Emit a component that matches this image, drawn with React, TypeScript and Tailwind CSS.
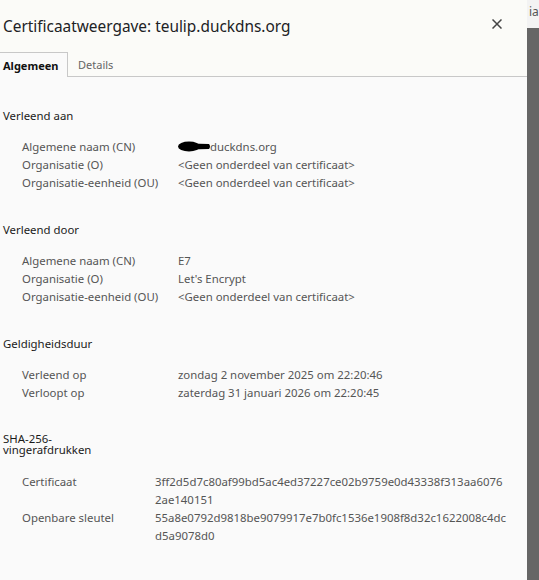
import React from "react";

const font = { fontFamily: '"Noto Sans", "Open Sans", Arial, sans-serif' };

function Row({ label, value, valueCol = "w-[178px]" }: { label: string; value: React.ReactNode; valueCol?: string }) {
  return (
    <div className="flex text-[11.4px] leading-[18px] text-[#555555]">
      <div className={`${valueCol} shrink-0 pl-[22px] whitespace-nowrap`}>{label}</div>
      <div className="flex-1 whitespace-nowrap">{value}</div>
    </div>
  );
}

function Section({
  title,
  children,
  first,
  titleClass = "leading-[13px]",
  bodyClass = "mt-[16px]",
}: {
  title: React.ReactNode;
  children: React.ReactNode;
  first?: boolean;
  titleClass?: string;
  bodyClass?: string;
}) {
  return (
    <div className={first ? "" : "mt-[31px]"}>
      <div className={`pl-[3px] text-[11.4px] text-[#1a1a1a] ${titleClass}`}>{title}</div>
      <div className={bodyClass}>{children}</div>
    </div>
  );
}

export default function App() {
  return (
    <div className="flex w-[539px] h-[580px] overflow-hidden bg-[#fafafa]" style={font}>
      <div className="w-[527px] shrink-0 bg-[#fafafa] flex flex-col">
        <div className="h-[52px] flex items-center justify-between pl-[3px] pr-[24px] bg-[#fbfbf8]">
          <div className="text-[15.4px] text-[#202124] mt-[1px]">Certificaatweergave: teulip.duckdns.org</div>
          <svg width="10" height="10" viewBox="0 0 10 10" className="mt-[-4px] mr-[1px]">
            <path d="M0.5 0.5 L9.5 9.5 M9.5 0.5 L0.5 9.5" stroke="#444" strokeWidth="1.5" />
          </svg>
        </div>
        <div className="flex h-[25px] bg-[#fbfbf8]">
          <div className="w-[68px] h-[25px] border-t border-r border-[#c8c8c8] bg-[#fafafa] flex items-center pl-[3px] pt-[2px] text-[11px] font-bold text-[#111]">
            Algemeen
          </div>
          <div className="flex-1 border-b border-[#c8c8c8] flex items-center pl-[10px] pt-[2px] text-[11px] text-[#666]">
            Details
          </div>
        </div>
        <div className="pt-[32px]">
          <Section title="Verleend aan" first>
            <Row
              label="Algemene naam (CN)"
              value={
                <div className="flex items-center h-[18px]">
                  <svg width="33" height="11" viewBox="0 0 33 11" className="shrink-0 mr-[-1px] mt-[-2px]">
                    <ellipse cx="11" cy="5.5" rx="11" ry="5" fill="#000" />
                    <path d="M12 2.5 L31 3 Q33 5.5 31 8 L12 8.5 Z" fill="#000" />
                  </svg>
                  <span>duckdns.org</span>
                </div>
              }
            />
            <Row label="Organisatie (O)" value="<Geen onderdeel van certificaat>" />
            <Row label="Organisatie-eenheid (OU)" value="<Geen onderdeel van certificaat>" />
          </Section>
          <Section title="Verleend door">
            <Row label="Algemene naam (CN)" value="E7" />
            <Row label="Organisatie (O)" value="Let's Encrypt" />
            <Row label="Organisatie-eenheid (OU)" value="<Geen onderdeel van certificaat>" />
          </Section>
          <Section title="Geldigheidsduur">
            <Row label="Verleend op" value="zondag 2 november 2025 om 22:20:46" />
            <Row label="Verloopt op" value="zaterdag 31 januari 2026 om 22:20:45" />
          </Section>
          <Section
            titleClass="leading-[11px]"
            bodyClass="mt-[18px]"
            title={
              <>
                SHA-256-
                <br />
                vingerafdrukken
              </>
            }
          >
            <Row
              label="Certificaat"
              valueCol="w-[155px]"
              value={
                <>
                  3ff2d5d7c80af99bd5ac4ed37227ce02b9759e0d43338f313aa6076
                  <br />
                  2ae140151
                </>
              }
            />
            <Row
              label="Openbare sleutel"
              valueCol="w-[155px]"
              value={
                <>
                  55a8e0792d9818be9079917e7b0fc1536e1908f8d32c1622008c4dc
                  <br />
                  d5a9078d0
                </>
              }
            />
          </Section>
        </div>
      </div>
      <div className="flex-1 flex flex-col">
        <div className="h-[28px] bg-[#f3f3f3] text-[12px] text-[#555] pl-[2px] pt-[3px]">ia</div>
        <div className="flex-1 bg-[#666666]" />
      </div>
    </div>
  );
}
